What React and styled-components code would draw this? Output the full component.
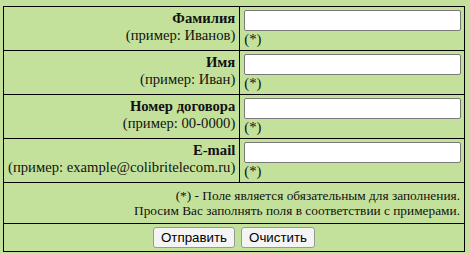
import React from 'react';
import styled, { createGlobalStyle } from 'styled-components';

const fields = [
  { name: 'lastname', label: 'Фамилия', hint: '(пример: Иванов)' },
  { name: 'firstname', label: 'Имя', hint: '(пример: Иван)' },
  { name: 'contract', label: 'Номер договора', hint: '(пример: 00-0000)' },
  { name: 'email', label: 'E-mail', hint: '(пример: example@colibritelecom.ru)' },
];

const GlobalStyle = createGlobalStyle`
  html, body {
    margin: 0;
    padding: 0;
    background: #c4e19b;
  }
`;

const Page = styled.div`
  padding: 6px 5px 0 3px;
  font-family: "Liberation Serif", "Times New Roman", serif;
  color: #111;
`;

const Table = styled.table`
  width: 100%;
  border-collapse: collapse;
  background: #c4e19b;
  border: 1px solid #000;
`;

const Cell = styled.td`
  border: 1px solid #000;
  padding: 3px 4px 2px;
  vertical-align: top;
  font: 14.67px/17px "Liberation Serif", "Times New Roman", serif;
`;

const LabelCell = styled(Cell)`
  text-align: right;
  white-space: nowrap;
`;

const FieldCell = styled(Cell)`
  width: 218px;
  padding-right: 3px;
`;

const Label = styled.b`
  display: block;
`;

const Input = styled.input`
  display: block;
  box-sizing: border-box;
  width: 100%;
  height: 21px;
  margin: 0;
  border: 1px solid #7a7a7a;
  border-radius: 2px;
  background: #fff;
`;

const Note = styled.div`
  font-size: 13.33px;
  line-height: 15px;
  text-align: right;
  padding: 2px 0 3px;
`;

const Buttons = styled.div`
  display: flex;
  justify-content: center;
  gap: 6px;
  padding: 0 0 1px;
`;

const Button = styled.button`
  height: 21px;
  padding: 0 7px;
  font-family: "Liberation Sans", Arial, sans-serif;
  font-size: 13.33px;
  color: #000;
  background: #f4f4f4;
  border: 1px solid #999;
  border-radius: 3px;
`;

export default function App() {
  return (
    <>
      <GlobalStyle />
      <Page>
        <form onSubmit={(e) => e.preventDefault()}>
          <Table>
            <tbody>
              {fields.map((f) => (
                <tr key={f.name}>
                  <LabelCell>
                    <Label>{f.label}</Label>
                    {f.hint}
                  </LabelCell>
                  <FieldCell>
                    <Input type="text" name={f.name} />
                    (*)
                  </FieldCell>
                </tr>
              ))}
              <tr>
                <Cell colSpan={2}>
                  <Note>
                    (*) - Поле является обязательным для заполнения.
                    <br />
                    Просим Вас заполнять поля в соответствии с примерами.
                  </Note>
                </Cell>
              </tr>
              <tr>
                <Cell colSpan={2}>
                  <Buttons>
                    <Button type="submit">Отправить</Button>
                    <Button type="reset">Очистить</Button>
                  </Buttons>
                </Cell>
              </tr>
            </tbody>
          </Table>
        </form>
      </Page>
    </>
  );
}
